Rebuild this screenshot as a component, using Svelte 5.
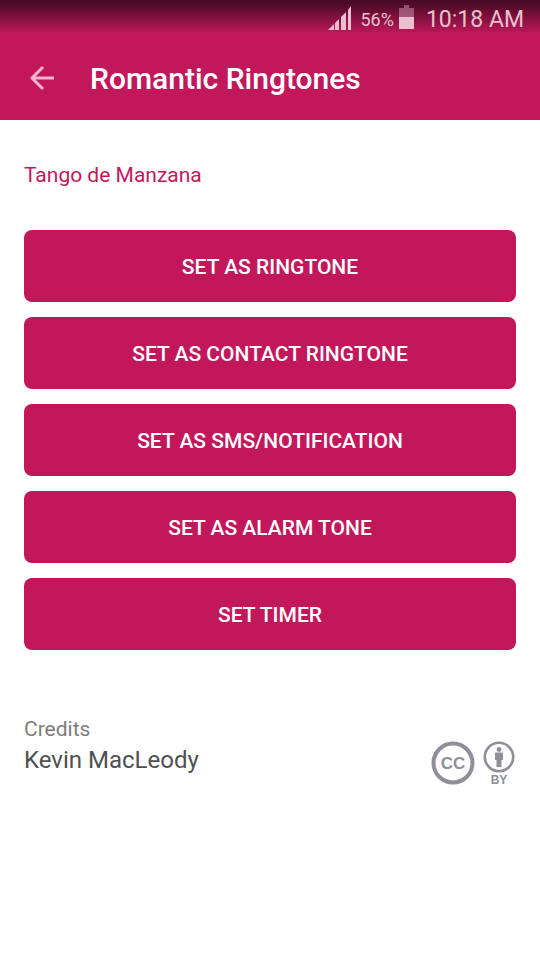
<script>
  const actions = [
    'Set as ringtone',
    'Set as contact ringtone',
    'Set as SMS/notification',
    'Set as alarm tone',
    'Set timer'
  ];
</script>

<header>
  <div class="status">
    <svg class="signal" width="24" height="24" viewBox="0 0 24 24" aria-hidden="true">
      <path d="M0 24L6 18V24ZM7 17L11 13V24H7ZM13 11L18 6V24H13ZM20 4L23 0V24H20Z" />
    </svg>
    <span class="percent">56%</span>
    <svg class="battery" width="15" height="24" viewBox="0 0 15 24" aria-hidden="true">
      <path opacity=".4" d="M5 0H10V3H15V12H0V3H5Z" />
      <path d="M0 12H15V24H0Z" />
    </svg>
    <time>10:18 AM</time>
  </div>
  <div class="bar">
    <button class="back" aria-label="Back">
      <svg width="26" height="26" viewBox="0 0 26 26" aria-hidden="true">
        <path d="M25 13H4M14 2L3 13L14 24" />
      </svg>
    </button>
    <h1>Romantic Ringtones</h1>
  </div>
</header>

<main>
  <h2>Tango de Manzana</h2>
  <div class="actions">
    {#each actions as action}
      <button class="action">{action}</button>
    {/each}
  </div>
  <section class="credits">
    <div>
      <p class="label">Credits</p>
      <p class="author">Kevin MacLeody</p>
    </div>
    <div class="license">
      <svg width="44" height="46" viewBox="0 0 44 46" role="img" aria-label="Creative Commons">
        <circle cx="22" cy="22" r="19.500" fill="none" stroke="#8e8f98" stroke-width="4" />
        <text x="22" y="28" font-size="17">CC</text>
      </svg>
      <svg width="32" height="46" viewBox="0 0 32 46" role="img" aria-label="Attribution">
        <circle cx="16" cy="16" r="14.200" fill="none" stroke="#8e8f98" stroke-width="2.600" />
        <circle cx="16" cy="8.500" r="2.400" />
        <path d="M13 11.500H19Q20 11.500 20 12.500V19H18.500V26H13.500V19H12V12.500Q12 11.500 13 11.500Z" />
        <text x="16" y="43" font-size="12">BY</text>
      </svg>
    </div>
  </section>
</main>

<style>
  :global(body) {
    margin: 0;
    background: #fff;
    font-family: Roboto, "Liberation Sans", sans-serif;
  }
  header {
    background: linear-gradient(#470a22 0, #4d0b26 4px, #c2185b 34px);
    color: #fff;
  }
  .status {
    display: flex;
    justify-content: flex-end;
    align-items: center;
    height: 36px;
    padding-right: 16px;
    color: #eac0d0;
    fill: #eac0d0;
  }
  .percent {
    margin: 2px 5px 0 9px;
    font-size: 18px;
  }
  .battery {
    margin-bottom: 2px;
  }
  time {
    margin: 2px 0 0 12px;
    font-size: 23px;
  }
  .bar {
    display: flex;
    align-items: center;
    height: 84px;
    padding-left: 29px;
  }
  button {
    border: 0;
    font-family: inherit;
    cursor: pointer;
  }
  .back {
    display: flex;
    padding: 0;
    background: none;
  }
  .back path {
    fill: none;
    stroke: #f0b4ce;
    stroke-width: 3;
    stroke-linejoin: round;
  }
  h1 {
    margin: 2px 0 0 35px;
    font-size: 30px;
    line-height: 36px;
    font-weight: 500;
  }
  main {
    padding: 41px 24px;
  }
  h2 {
    margin: 0 0 41px;
    font-size: 21px;
    line-height: 28px;
    font-weight: 400;
    color: #c2185b;
  }
  .actions {
    display: flex;
    flex-direction: column;
    gap: 15px;
  }
  .action {
    height: 72px;
    padding: 2px 16px 0;
    border-radius: 8px;
    background: #c2185b;
    color: #fff;
    font-size: 21px;
    font-weight: 500;
    text-transform: uppercase;
  }
  .credits {
    display: flex;
    justify-content: space-between;
    align-items: flex-end;
    margin-top: 65px;
  }
  p {
    margin: 0;
  }
  .label {
    font-size: 21px;
    line-height: 28px;
    color: #7d7d7d;
  }
  .author {
    margin-bottom: 10px;
    font-size: 24px;
    line-height: 34px;
    color: #505050;
  }
  .license {
    display: flex;
    gap: 8px;
    margin-right: 1px;
    fill: #8e8f98;
  }
  .license text {
    font-family: "Liberation Sans", sans-serif;
    font-weight: 700;
    text-anchor: middle;
  }
</style>
